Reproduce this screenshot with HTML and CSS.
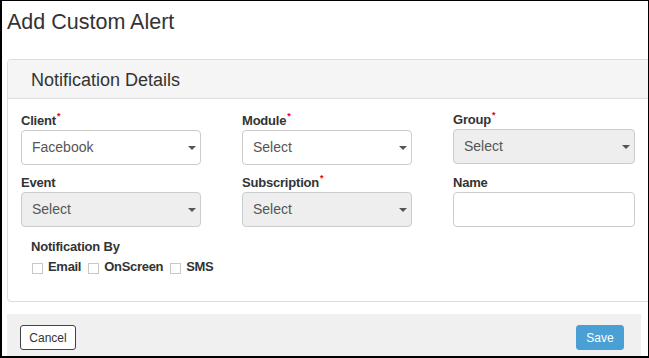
FILE: index.html
```html
<!DOCTYPE html>
<html lang="en">
<head>
    <meta charset="UTF-8">
    <title>Add Custom Alert</title>
    <link rel="stylesheet" href="styles.css">
</head>
<body>
    <div class="frame">
        <h1 class="page-title">Add Custom Alert</h1>

        <section class="panel">
            <div class="panel-heading">Notification Details</div>
            <div class="panel-body">
                <div class="form-grid">
                    <div class="field">
                        <label>Client<span class="req">*</span></label>
                        <div class="select">Facebook</div>
                    </div>
                    <div class="field">
                        <label>Module<span class="req">*</span></label>
                        <div class="select">Select</div>
                    </div>
                    <div class="field field-up">
                        <label>Group<span class="req">*</span></label>
                        <div class="select disabled">Select</div>
                    </div>
                    <div class="field">
                        <label>Event</label>
                        <div class="select disabled">Select</div>
                    </div>
                    <div class="field">
                        <label>Subscription<span class="req">*</span></label>
                        <div class="select disabled">Select</div>
                    </div>
                    <div class="field">
                        <label>Name</label>
                        <input type="text" class="text-input">
                    </div>
                </div>

                <div class="notify">
                    <div class="notify-title">Notification By</div>
                    <div class="checks">
                        <span class="check"><span class="box"></span>Email</span>
                        <span class="check"><span class="box"></span>OnScreen</span>
                        <span class="check"><span class="box"></span>SMS</span>
                    </div>
                </div>
            </div>
        </section>

        <div class="footer">
            <button class="btn btn-cancel">Cancel</button>
            <button class="btn btn-save">Save</button>
        </div>
    </div>
</body>
</html>
```

FILE: styles.css
```css
body {
    margin: 0;
    font-family: "Liberation Sans", Arial, sans-serif;
    color: #333;
    background: white;
}

.frame {
    box-sizing: border-box;
    width: 649px;
    height: 358px;
    border: 1px solid #000;
    border-left-width: 2px;
    border-bottom-width: 2px;
    padding: 9px 0 0 5px;
    overflow: hidden;
}

.page-title {
    margin: 0;
    font-size: 21.5px;
    line-height: 24px;
    font-weight: normal;
    color: #333;
}

.panel {
    margin: 25px -20px 0 0;
    border: 1px solid #ddd;
    border-radius: 4px;
    background: white;
}

.panel-heading {
    height: 39px;
    box-sizing: border-box;
    padding: 10px 23px;
    font-size: 18px;
    line-height: 20px;
    background: #f5f5f5;
    border-bottom: 1px solid #ddd;
    border-radius: 4px 4px 0 0;
}

.panel-body {
    padding: 13px 13px 25px;
}

.form-grid {
    display: grid;
    grid-template-columns: 180px 170px 182px;
    column-gap: 41px;
    row-gap: 9px;
}

.field label {
    display: block;
    font-size: 13px;
    line-height: 18px;
    font-weight: bold;
    letter-spacing: -0.2px;
    color: #333;
}

.field-up {
    margin-top: -1px;
}

.req {
    color: #e00;
    font-size: 9px;
    vertical-align: top;
    line-height: 9px;
    margin-left: 1px;
}

.select {
    position: relative;
    box-sizing: border-box;
    height: 35px;
    padding: 0 10px;
    border: 1px solid #ccc;
    border-radius: 4px;
    font-size: 14px;
    line-height: 33px;
    color: #555;
    background: white;
}

.select::after {
    content: "";
    position: absolute;
    right: 4px;
    top: 15px;
    border-top: 4px solid #555;
    border-left: 4px solid transparent;
    border-right: 4px solid transparent;
}

.select.disabled {
    background: #eee;
}

.text-input {
    display: block;
    box-sizing: border-box;
    width: 100%;
    height: 35px;
    margin: 0;
    border: 1px solid #ccc;
    border-radius: 4px;
    background: white;
}

.notify {
    margin: 11px 0 0 10px;
}

.notify-title {
    font-size: 13px;
    line-height: 18px;
    font-weight: bold;
    letter-spacing: -0.2px;
}

.checks {
    display: flex;
    margin-top: 2px;
    font-size: 13px;
    line-height: 18px;
    font-weight: bold;
    letter-spacing: -0.3px;
}

.check {
    display: flex;
    align-items: center;
    margin-right: 6px;
}

.box {
    box-sizing: border-box;
    width: 11px;
    height: 11px;
    margin: 2px 5px 0 1px;
    border: 1px solid #c8c8c8;
    background: white;
}

.footer {
    display: flex;
    justify-content: space-between;
    align-items: flex-start;
    height: 44px;
    margin: 12px 7px 0 0;
    padding: 11px 17px 0 13px;
    box-sizing: border-box;
    background: #f0f0f0;
}

.btn {
    height: 25px;
    padding: 0;
    font-family: "Liberation Sans", Arial, sans-serif;
    font-size: 12px;
    border-radius: 3px;
    cursor: pointer;
}

.btn-cancel {
    width: 56px;
    border: 1px solid #444;
    background: white;
    color: #333;
}

.btn-save {
    width: 48px;
    border: 1px solid #4a9fd5;
    background: #4a9fd5;
    color: white;
}
```
